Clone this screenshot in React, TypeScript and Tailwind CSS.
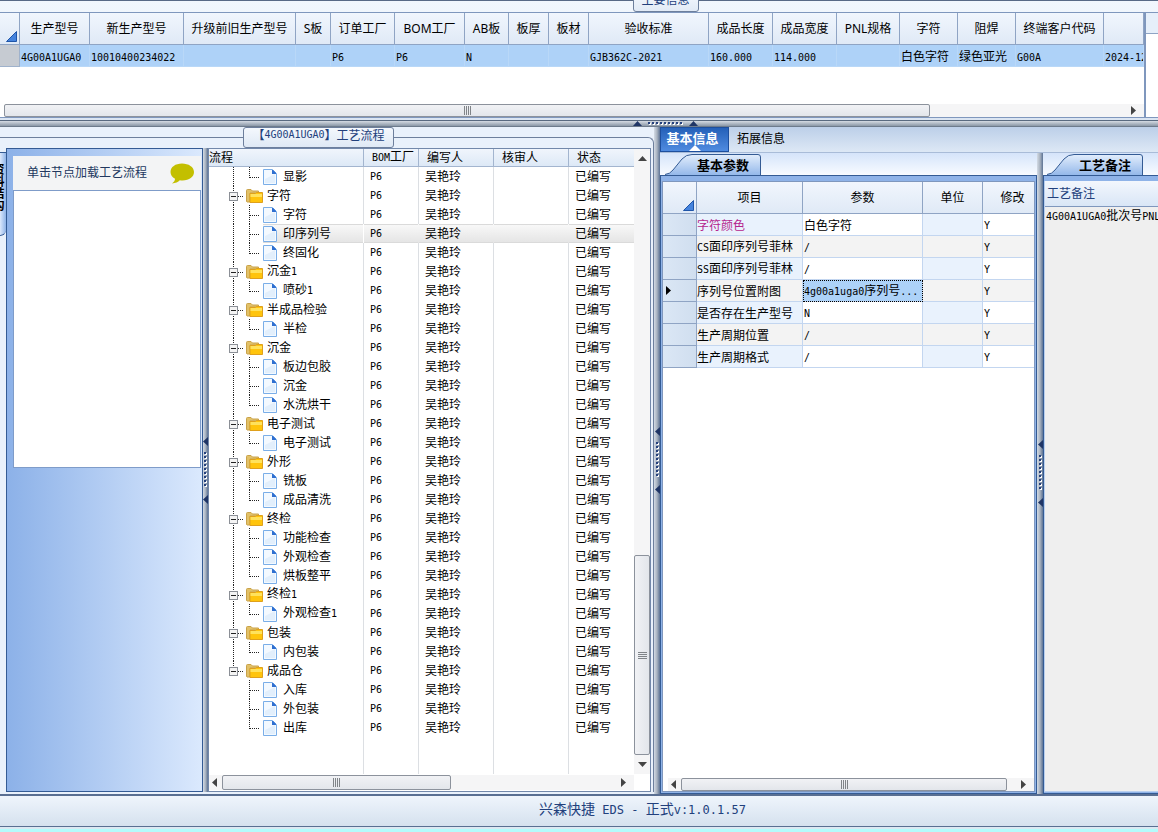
import { Fragment } from 'react';
import clsx from 'clsx';

type Size = 'sm' | 'md';

// Latin runs are set in a half-width mono face next to full-width CJK glyphs
function Mixed({ text, size = 'sm' }: { text: string; size?: Size }) {
  return (
    <>
      {text.split(/([\x20-\x7e]+)/).map((part, i) =>
        i % 2 ? (
          <span
            key={i}
            className={clsx(
              "font-['DejaVu_Sans_Mono','Liberation_Mono',monospace]",
              size === 'sm' ? 'text-[10px]' : 'text-[12px]',
            )}
          >
            {part}
          </span>
        ) : (
          <Fragment key={i}>{part}</Fragment>
        ),
      )}
    </>
  );
}

const mainColumns = [
  { title: '生产型号', width: 'w-[70px]', value: '4G00A1UGA0' },
  { title: '新生产型号', width: 'w-[94px]', value: '10010400234022' },
  { title: '升级前旧生产型号', width: 'w-[112px]', value: '' },
  { title: 'S板', width: 'w-[35px]', value: '' },
  { title: '订单工厂', width: 'w-[64px]', value: 'P6' },
  { title: 'BOM工厂', width: 'w-[70px]', value: 'P6' },
  { title: 'AB板', width: 'w-[44px]', value: 'N' },
  { title: '板厚', width: 'w-[40px]', value: '' },
  { title: '板材', width: 'w-[40px]', value: '' },
  { title: '验收标准', width: 'w-[120px]', value: 'GJB362C-2021' },
  { title: '成品长度', width: 'w-[64px]', value: '160.000' },
  { title: '成品宽度', width: 'w-[64px]', value: '114.000' },
  { title: 'PNL规格', width: 'w-[63px]', value: '' },
  { title: '字符', width: 'w-[58px]', value: '白色字符' },
  { title: '阻焊', width: 'w-[58px]', value: '绿色亚光' },
  { title: '终端客户代码', width: 'w-[88px]', value: 'G00A' },
  { title: '', width: '', value: '2024-12' },
];

const flow: { name: string; steps: string[] }[] = [
  { name: '', steps: ['显影'] },
  { name: '字符', steps: ['字符', '印序列号', '终固化'] },
  { name: '沉金1', steps: ['喷砂1'] },
  { name: '半成品检验', steps: ['半检'] },
  { name: '沉金', steps: ['板边包胶', '沉金', '水洗烘干'] },
  { name: '电子测试', steps: ['电子测试'] },
  { name: '外形', steps: ['铣板', '成品清洗'] },
  { name: '终检', steps: ['功能检查', '外观检查', '烘板整平'] },
  { name: '终检1', steps: ['外观检查1'] },
  { name: '包装', steps: ['内包装'] },
  { name: '成品仓', steps: ['入库', '外包装', '出库'] },
];

const params = [
  { name: '字符颜色', value: '白色字符' },
  { name: 'CS面印序列号菲林', value: '/' },
  { name: 'SS面印序列号菲林', value: '/' },
  { name: '序列号位置附图', value: '4g00a1uga0序列号...' },
  { name: '是否存在生产型号', value: 'N' },
  { name: '生产周期位置', value: '/' },
  { name: '生产周期格式', value: '/' },
];

function CornerMark() {
  return (
    <svg width="11" height="11" viewBox="0 0 11 11" className="mr-[2px] mb-[2px]">
      <path d="M10.5 0.5V10.5H0.5Z" fill="#4583dd" stroke="#1f55a8" />
    </svg>
  );
}

const arrowPaths = {
  up: 'M4.5 1L9 6H0Z',
  down: 'M0 1H9L4.5 6Z',
  left: 'M6 0V9L1 4.5Z',
  right: 'M1 0V9L6 4.5Z',
};

function Arrow({ dir, fill = '#444444' }: { dir: keyof typeof arrowPaths; fill?: string }) {
  const vertical = dir === 'up' || dir === 'down';
  return (
    <svg width={vertical ? 9 : 7} height={vertical ? 7 : 9} className="shrink-0">
      <path d={arrowPaths[dir]} fill={fill} />
    </svg>
  );
}

function Grip({ vertical = false }: { vertical?: boolean }) {
  return (
    <svg width="9" height="9" viewBox="0 0 9 9" stroke="#808488">
      <path d={vertical ? 'M0 1.5H9M0 3.5H9M0 5.5H9M0 7.5H9' : 'M1.5 0V9M3.5 0V9M5.5 0V9M7.5 0V9'} />
    </svg>
  );
}

function HScroll({ thumb, start = true }: { thumb: string; start?: boolean }) {
  return (
    <div className="flex h-full w-full items-stretch bg-[#f5f5f6]">
      {start && (
        <button aria-label="向左滚动" className="flex w-[13px] shrink-0 items-center pl-[2px]">
          <Arrow dir="left" />
        </button>
      )}
      <div
        className={clsx(
          'flex items-center justify-center rounded-[2px] border border-[#8c929c] bg-linear-to-b from-[#f1f2f5] to-[#e3e6eb]',
          thumb,
        )}
      >
        <Grip />
      </div>
      <button aria-label="向右滚动" className="ml-auto flex w-[14px] shrink-0 items-center">
        <Arrow dir="right" />
      </button>
    </div>
  );
}

function VSplitter({ className = '' }: { className?: string }) {
  return (
    <div
      className={clsx(
        'flex shrink-0 flex-col items-center justify-center overflow-hidden bg-linear-to-r from-[#d3dbe5] via-[#a9b3c0] to-[#5d7394]',
        className,
      )}
    >
      <Arrow dir="left" fill="#1f3566" />
      <svg width="3" height="35" className="mt-1.5 mb-2">
        <path d="M2 1V35" stroke="#ffffff" strokeWidth="2" strokeDasharray="2 2" />
        <path d="M1 0V35" stroke="#24407c" strokeWidth="2" strokeDasharray="2 2" />
      </svg>
      <Arrow dir="left" fill="#1f3566" />
    </div>
  );
}

function FolderIcon() {
  return (
    <svg width="17" height="14" viewBox="0 0 17 14" className="shrink-0">
      <path d="M0.5 12.5V1.5Q0.5 0.5 1.5 0.5H5L6.5 2H12.5V4H4V13H1Z" fill="#e2c168" stroke="#c9a24a" />
      <path d="M4 13.5V4.5H9.5L10.5 3.5H16.5V13.5Z" fill="#ffc40c" stroke="#dfa01c" />
      <path d="M4.500 5H16V8H4.500Z" fill="#ffe25c" />
    </svg>
  );
}

function DocIcon() {
  return (
    <svg width="14" height="16" viewBox="0 0 14 16" className="shrink-0">
      <path d="M0.5 0.5H9.5L13.5 4.5V15.5H0.5Z" fill="#f3f9ff" stroke="#7aaee8" />
      <path d="M2 10L12 5V14H2Z" fill="#e2effc" />
      <path d="M9 1H10L13 4V5H9Z" fill="#2f6fd0" />
    </svg>
  );
}

function FlowRow({ name, kind, last, tail }: { name: string; kind: 'group' | 'step'; last: boolean; tail: boolean }) {
  const active = name === '印序列号';
  const cell = clsx('h-[19px] border-r p-0', active ? 'border-r-transparent' : 'border-r-[#dcdfe3]');
  const band = active && 'bg-linear-to-b from-[#f9f9f9] to-[#e4e4e4] shadow-[inset_0_1px_#dadada,inset_0_-1px_#dadada]';
  return (
    <tr>
      <td className={cell}>
        <div className="flex h-[19px] items-center">
          {kind === 'group' ? (
            <>
              <svg width="37" height="19" className="shrink-0" stroke="#222222">
                <path d={tail ? 'M24.5 0V10' : 'M24.5 0V19'} strokeDasharray="1 1" />
                <path d="M29 10.5H34" strokeDasharray="1 1" />
                <rect x="20.5" y="6.5" width="8" height="8" fill="#f4f4f4" stroke="#8b8f96" />
                <path d="M22 10.5H27" />
              </svg>
              <FolderIcon />
              <span className="pb-0.5 pl-1">
                <Mixed text={name} />
              </span>
            </>
          ) : (
            <>
              <svg width="54" height="19" className="shrink-0" stroke="#222222" strokeDasharray="1 1">
                {!tail && <path d="M24.5 0V19" />}
                <path d={last ? 'M40.5 0V11' : 'M40.5 0V19'} />
                <path d="M41 10.5H50" />
              </svg>
              <div className={clsx('flex h-full flex-1 items-center', band)}>
                <DocIcon />
                <span className="pb-0.5 pl-1.5">
                  <Mixed text={name} />
                </span>
              </div>
            </>
          )}
        </div>
      </td>
      <td className={clsx(cell, band, 'pb-0.5 pl-1.5')}>
        <Mixed text="P6" />
      </td>
      <td className={clsx(cell, band, 'pb-0.5 pl-1.5')}>吴艳玲</td>
      <td className={clsx(cell, band)} />
      <td className={clsx('h-[19px] p-0 pb-0.5 pl-1.5', band)}>已编写</td>
    </tr>
  );
}

function SlantTab({ label }: { label: string }) {
  return (
    <button role="tab" aria-selected="true" className="relative h-[21px] w-[96px] pl-8 text-left text-[13px] font-bold">
      <svg width="96" height="21" viewBox="0 0 96 21" className="absolute inset-0">
        <defs>
          <linearGradient id="slant" x1="0" y1="0" x2="0" y2="1">
            <stop offset="0" stopColor="#e3eefc" />
            <stop offset="1" stopColor="#94b8ea" />
          </linearGradient>
        </defs>
        <path
          d="M0 20.5Q5 20 8 16L17 5Q21 0.5 27 0.5H93Q95.5 0.5 95.5 3V21H0Z"
          fill="url(#slant)"
        />
        <path d="M0 20.5Q5 20 8 16L17 5Q21 0.5 27 0.5H93Q95.5 0.5 95.5 3V21" fill="none" stroke="#345b94" />
      </svg>
      <span className="relative">{label}</span>
    </button>
  );
}

function MainInfo() {
  return (
    <section className="flex h-[118px] shrink-0 flex-col bg-linear-to-b from-[#f2f7fd] to-[#e3edf9]">
      <div className="flex h-3 shrink-0 items-end justify-center border-t border-[#596a86] pl-[173px]">
        <h2 className="flex h-5 w-[66px] shrink-0 items-center justify-center rounded-[3px] border border-[#6d7f9c] bg-linear-to-b from-[#f4f8fd] to-[#e1eaf6] pb-1.5 leading-none text-[#22407c]">
          主要信息
        </h2>
      </div>
      <div className="flex min-h-0 flex-1">
        <div className="flex min-w-0 flex-1 flex-col border-y border-r-2 border-[#7f97bd] bg-white">
          <div className="min-h-0 flex-1 overflow-hidden">
            <table className="w-full table-fixed border-separate border-spacing-0 whitespace-nowrap">
              <thead>
                <tr className="h-8 bg-linear-to-b from-[#f1f6fd] to-[#dfe9f6] font-['Noto_Sans','Noto_Sans_CJK_SC',sans-serif]">
                  <th className="w-5 border-r border-b border-[#8fa4c4] p-0 align-bottom">
                    <div className="flex justify-end">
                      <CornerMark />
                    </div>
                  </th>
                  {mainColumns.map((c, i) => (
                    <th key={i} className={clsx('border-r border-b border-[#8fa4c4] p-0 font-normal', c.width)}>
                      {c.title}
                    </th>
                  ))}
                </tr>
              </thead>
              <tbody>
                <tr className="h-[22px] bg-[#aed2f8]">
                  <td className="border-r border-b border-[#9fb2cc] bg-[#c6cbd2] p-0" />
                  {mainColumns.map((c, i) => (
                    <td key={i} className="overflow-hidden border-r border-b border-[#b9d8f8] p-0 pl-px">
                      <Mixed text={c.value} />
                    </td>
                  ))}
                </tr>
              </tbody>
            </table>
          </div>
          <div className="h-[13px] shrink-0 pl-1">
            <HScroll start={false} thumb="flex-1 mr-[200px]" />
          </div>
        </div>
        <div className="w-3 shrink-0 border-y border-[#7f97bd] bg-white">
          <div className="h-[21px] border-b border-[#8fa4c4] bg-[#e6effa]" />
        </div>
      </div>
    </section>
  );
}

function NodePanel() {
  return (
    <div className="flex w-[203px] shrink-0">
      <div className="w-[6px] overflow-hidden pt-1">
        <button
          role="tab"
          aria-label="资料结构"
          className="flex h-[84px] w-full items-start justify-end rounded-br-[6px] border-t border-b border-[#345b94] bg-linear-to-l from-[#8fb4e8] to-[#dbe8fb] pt-2.5 pr-0.5 text-[12px] leading-none font-bold"
        >
          <span className="[writing-mode:vertical-rl]">资料结构</span>
        </button>
      </div>
      <div className="flex flex-1 flex-col border border-[#345b94] bg-linear-to-r from-[#8cb1e8] to-[#dbe9fd] pt-[7px] pr-px pl-1.5">
        <div className="flex h-[34px] shrink-0 items-center justify-between bg-[#f3f4f5] pr-[7px] pl-3.5 text-[#22385f]">
          <span className="pb-0.5 leading-none">单击节点加载工艺流程</span>
          <svg width="24" height="21" viewBox="0 0 24 21">
            <path d="M12 0.5C5.4 0.5 0.5 4 0.5 9C0.5 11.8 2.3 14.3 5 15.8C5 17.6 4 19 2 20.5C5.5 20.3 8.2 19 9.8 17.3C18 18.4 24 14.5 24 9C24 4 18.6 0.5 12 0.5Z" fill="#c3bf00" />
          </svg>
        </div>
        <div className="h-[278px] border border-[#7f9cc9] bg-white" />
      </div>
    </div>
  );
}

function FlowTree() {
  const head = 'h-[18px] border-r border-b border-[#a3b5cf] p-0 pb-0.5 text-left font-normal leading-none';
  return (
    <div className="mr-0.5 flex min-w-0 flex-1 flex-col border border-[#7288aa] bg-white">
      <div className="flex min-h-0 flex-1">
        <table className="h-full flex-1 table-fixed border-separate border-spacing-0 leading-none whitespace-nowrap">
          <thead>
            <tr className="bg-linear-to-b from-[#f0f5fc] to-[#dce8f6]">
              <th className={clsx(head, 'w-[155px]')}>流程</th>
              <th className={clsx(head, 'w-[55px] pl-2')}>
                <Mixed text="BOM工厂" />
              </th>
              <th className={clsx(head, 'w-[75px] pl-2')}>编写人</th>
              <th className={clsx(head, 'w-[75px] pl-2')}>核审人</th>
              <th className="h-[18px] border-b border-[#a3b5cf] p-0 pb-0.5 pl-2 text-left leading-none font-normal">状态</th>
            </tr>
          </thead>
          <tbody>
            {flow.map((g, gi) => {
              const tail = gi === flow.length - 1;
              return (
                <Fragment key={gi}>
                  {g.name && <FlowRow name={g.name} kind="group" last={false} tail={tail} />}
                  {g.steps.map((s, si) => (
                    <FlowRow key={s} name={s} kind="step" last={si === g.steps.length - 1} tail={tail} />
                  ))}
                </Fragment>
              );
            })}
            <tr>
              <td className="border-r border-[#dcdfe3]" />
              <td className="border-r border-[#dcdfe3]" />
              <td className="border-r border-[#dcdfe3]" />
              <td className="border-r border-[#dcdfe3]" />
              <td />
            </tr>
          </tbody>
        </table>
        <div className="flex w-4 shrink-0 flex-col bg-[#f5f5f6]">
          <button aria-label="向上滚动" className="flex h-[18px] shrink-0 items-center justify-center">
            <Arrow dir="up" />
          </button>
          <div className="mt-auto flex h-[200px] items-center justify-center rounded-[2px] border border-[#8c929c] bg-linear-to-r from-[#f1f2f5] to-[#e3e6eb]">
            <Grip vertical />
          </div>
          <button aria-label="向下滚动" className="flex h-[19px] shrink-0 items-center justify-center">
            <Arrow dir="down" />
          </button>
        </div>
      </div>
      <div className="h-[17px] shrink-0 pt-px pr-4 pb-px">
        <HScroll thumb="w-[229px]" />
      </div>
    </div>
  );
}

function ParamGrid() {
  const head = 'h-8 border-r border-b border-[#8fa4c4] p-0 font-normal';
  return (
    <div className="flex w-[377px] shrink-0 flex-col">
      <div role="tablist" className="flex h-[23px] shrink-0 items-end border-b border-[#345b94] bg-linear-to-b from-[#d5e4fa] to-[#f8fbff] pl-[5px]">
        <SlantTab label="基本参数" />
      </div>
      <div className="flex min-h-0 flex-1 flex-col border-x border-b border-[#345b94] bg-[#8fb3e8] px-px pt-[5px] pb-px">
        <div className="flex min-h-0 flex-1 flex-col border border-[#7f97bd] bg-white">
          <div className="min-h-0 flex-1">
            <table className="w-full table-fixed border-separate border-spacing-0 leading-none whitespace-nowrap">
              <thead>
                <tr className="bg-linear-to-b from-[#f1f6fd] to-[#dfe9f6] font-['Noto_Sans','Noto_Sans_CJK_SC',sans-serif]">
                  <th className={clsx(head, 'w-[34px] align-bottom')}>
                    <div className="flex justify-end">
                      <CornerMark />
                    </div>
                  </th>
                  <th className={clsx(head, 'w-[106px]')}>项目</th>
                  <th className={clsx(head, 'w-[120px]')}>参数</th>
                  <th className={clsx(head, 'w-[60px]')}>单位</th>
                  <th className="h-8 border-b border-[#8fa4c4] p-0 pl-2 font-normal">修改</th>
                </tr>
              </thead>
              <tbody>
                {params.map((p, i) => {
                  const cell = 'h-[22px] border-r border-b border-[#c3d6f0] p-0';
                  return (
                    <tr key={p.name} className={i % 2 ? 'bg-[#f3f3f3]' : 'bg-white'}>
                      <td className="h-[22px] border-r border-b border-[#8fa4c4] bg-linear-to-r from-[#dbe7f5] to-[#d0deef] p-0 pl-[2px]">
                        {i === 3 && <Arrow dir="right" fill="#000000" />}
                      </td>
                      <td className={clsx(cell, i % 2 === 0 && 'bg-[#e9f2fd]', i === 0 && 'text-[#b5258e]')}>
                        <Mixed text={p.name} />
                      </td>
                      <td
                        className={clsx(
                          cell,
                          'pl-px',
                          i === 3 && 'bg-[#add2f8] outline-1 -outline-offset-1 outline-black outline-dotted',
                        )}
                      >
                        <Mixed text={p.value} />
                      </td>
                      <td className={clsx(cell, i % 2 === 0 && 'bg-[#e9f2fd]')} />
                      <td className="h-[22px] border-b border-[#c3d6f0] p-0 pl-px">
                        <Mixed text="Y" />
                      </td>
                    </tr>
                  );
                })}
              </tbody>
            </table>
          </div>
          <div className="h-[13px] shrink-0 pl-[5px]">
            <HScroll thumb="mr-[13px] flex-1" />
          </div>
        </div>
      </div>
    </div>
  );
}

function Notes() {
  return (
    <div className="flex min-w-0 flex-1 flex-col">
      <div role="tablist" className="flex h-[23px] shrink-0 items-end border-b border-[#345b94] bg-linear-to-b from-[#d5e4fa] to-[#f8fbff] pl-1">
        <SlantTab label="工艺备注" />
      </div>
      <div className="flex min-h-0 flex-1 flex-col border-b border-l border-[#345b94] bg-[#8fb3e8] pt-[5px] pb-px">
        <div className="flex min-h-0 flex-1 flex-col border-b border-l border-[#b9cfee] bg-[#efefef]">
          <h3 className="flex h-[26px] shrink-0 items-center border-b border-[#7f97bd] bg-linear-to-b from-[#f3f7fd] to-[#d9e6f6] pb-0.5 pl-[2px] leading-none text-[#22407c]">
            工艺备注
          </h3>
          <p className="overflow-hidden pl-px leading-4 whitespace-nowrap">
            <Mixed text="4G00A1UGA0批次号PNL" />
          </p>
        </div>
      </div>
    </div>
  );
}

export default function App() {
  return (
    <div className="flex h-screen w-full flex-col overflow-hidden bg-[#e9f1fb] font-['Noto_Sans_CJK_SC',sans-serif] text-[12px] text-black">
      <MainInfo />

      {/* horizontal splitter */}
      <div className="h-[2px] shrink-0 bg-[#dbe5f2]" />
      <div className="flex h-[7px] shrink-0 items-center justify-center border-t border-b border-t-[#596a80] border-b-[#6d7b8c] bg-linear-to-b from-[#d5dbe3] to-[#8b98a7] pl-[172px]">
        <Arrow dir="up" fill="#1f3566" />
        <svg width="35" height="3" className="mx-1.5">
          <path d="M1 2H35" stroke="#ffffff" strokeWidth="2" strokeDasharray="2 2" />
          <path d="M0 1H35" stroke="#24407c" strokeWidth="2" strokeDasharray="2 2" />
        </svg>
        <Arrow dir="up" fill="#1f3566" />
      </div>

      <div className="flex min-h-0 flex-1">
        <fieldset className="mb-0.5 flex w-[654px] shrink-0 flex-col rounded-tr-[6px] border-t border-r border-[#6d7f9c]">
          <legend className="ml-[243px] flex h-[21px] w-[151px] items-center justify-center rounded-[3px] border border-[#6d7f9c] bg-linear-to-b from-[#f4f8fd] to-[#dfe9f5] pb-1.5 leading-none whitespace-nowrap text-[#22407c]">
            <Mixed text="【4G00A1UGA0】工艺流程" />
          </legend>
          <div className="flex min-h-0 flex-1">
            <NodePanel />
            <VSplitter className="w-[5px]" />
            <FlowTree />
          </div>
        </fieldset>
        <VSplitter className="w-[6px]" />

        <div className="flex min-w-0 flex-1 flex-col">
          <div role="tablist" className="flex h-[26px] shrink-0 items-stretch border-b border-[#a9bcd8] bg-linear-to-b from-[#bccfe9] to-[#dde8f5]">
            <button
              role="tab"
              aria-selected="true"
              className="relative w-[69px] border border-[#1d4f9e] bg-linear-to-b from-[#2460b8] to-[#4f8be0] pr-1 pb-1 text-[13px] leading-none font-bold text-white"
            >
              基本信息
              <svg width="12" height="6" className="absolute bottom-0 left-[28px]">
                <path d="M6 0L12 6H0Z" fill="#ffffff" />
              </svg>
            </button>
            <button role="tab" aria-selected="false" className="px-2 pb-1 leading-none">
              拓展信息
            </button>
          </div>
          <div className="flex min-h-0 flex-1">
            <ParamGrid />
            <VSplitter className="w-[6px]" />
            <Notes />
          </div>
        </div>
      </div>

      <footer className="flex h-[33px] shrink-0 items-center justify-center border-t-2 border-b border-[#596f92] bg-linear-to-b from-[#eff5fc] to-[#d5e1ee] pb-1.5 pl-[127px] text-[14px] text-[#22407c]">
        <span className="whitespace-pre">
          <Mixed size="md" text="兴森快捷 EDS - 正式v:1.0.1.57" />
        </span>
      </footer>
      <div className="h-[5px] shrink-0 border-t-2 border-[#dbe8f2] bg-[#b4fbfb]" />
    </div>
  );
}
